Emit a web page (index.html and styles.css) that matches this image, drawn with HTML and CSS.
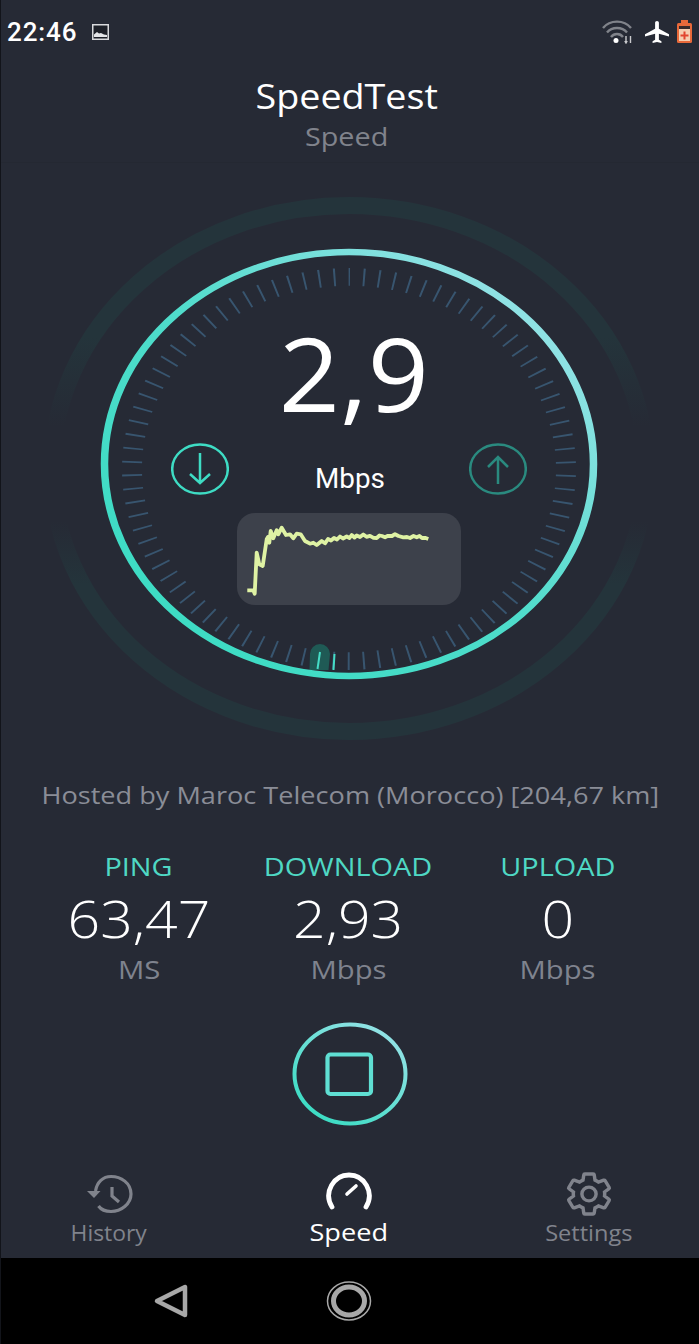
FILE: index.html
```html
<!DOCTYPE html>
<html lang="en">
<head>
    <meta charset="UTF-8">
    <title>SpeedTest</title>
    <link rel="stylesheet" href="styles.css">
</head>
<body>
<div class="app">
    <div class="status-bar">
        <div class="status-left">
            <span class="clock">22:46</span>
            <svg class="pic-icon" width="17" height="16" viewBox="0 0 17 16">
                <rect x="0.75" y="0.75" width="15.5" height="14.5" fill="#1d2028" stroke="#d8d9dc" stroke-width="1.5"/>
                <path d="M2 13V10.5L5 8l2 1.5 2-.5 3 1.5 3 .5V13z" fill="#e4e5e8"/>
            </svg>
        </div>
        <div class="status-right">
            <svg class="wifi-icon" width="30" height="24" viewBox="0 0 30 24" fill="none" stroke="#80838a" stroke-width="2.4">
                <path d="M1 8C8 -0.500 22 -0.500 29 8"/>
                <path d="M5 12.500C10 6.500 20 6.500 25 12.500"/>
                <path d="M9 17C12 13 18 13 21 17"/>
                <circle cx="14" cy="20.500" r="2.500" fill="#ffffff" stroke="none"/>
                <path d="M24 16v7M22.800 21l1.200 2 1.200-2M28.500 23v-7" stroke="#c9cacd" stroke-width="1.400"/>
            </svg>
            <svg class="plane-icon" width="24" height="22" viewBox="2 2 19 20" preserveAspectRatio="none">
                <path fill="#ffffff" d="M21 16v-2l-8-5V3.500c0-.83-.67-1.500-1.500-1.500S10 2.670 10 3.500V9l-8 5v2l8-2.500V19l-2 1.500V22l3.500-1 3.500 1v-1.500L13 19v-5.500l8 2.500z"/>
            </svg>
            <svg class="battery-icon" width="15" height="23" viewBox="0 0 15 23">
                <rect x="4" y="0" width="7" height="4" fill="#e8693a"/>
                <rect x="0" y="3" width="15" height="20" rx="1.500" fill="#e8693a"/>
                <rect x="2" y="6" width="11" height="3" fill="#3a2a2a"/>
                <rect x="2" y="9" width="11" height="12" fill="#f6cdb0"/>
                <path d="M6.500 11.500h2v3h3v2h-3v3h-2v-3h-3v-2h3z" fill="#e2452f"/>
            </svg>
        </div>
    </div>

    <header class="top-title">
        <h1>SpeedTest</h1>
        <p>Speed</p>
    </header>

    <section class="gauge">
        <svg class="gauge-art" width="699" height="600" viewBox="0 163 699 600">
            <defs>
                <linearGradient id="ringGrad" x1="0.2" y1="0.9" x2="0.9" y2="0.2">
                    <stop offset="0" stop-color="#3edcc4"/>
                    <stop offset="0.5" stop-color="#4fdccb"/>
                    <stop offset="1" stop-color="#8fe2e4"/>
                </linearGradient>
                <linearGradient id="haloGrad" x1="0" y1="0" x2="0" y2="1">
                    <stop offset="0" stop-color="#24343b"/>
                    <stop offset="0.25" stop-color="#24343b"/>
                    <stop offset="0.42" stop-color="#24343b" stop-opacity="0"/>
                    <stop offset="0.6" stop-color="#24343b" stop-opacity="0"/>
                    <stop offset="0.72" stop-color="#24343b"/>
                    <stop offset="1" stop-color="#24343b"/>
                </linearGradient>
            </defs>
            <ellipse cx="349" cy="468.500" rx="297" ry="263" fill="none" stroke="url(#haloGrad)" stroke-width="17"/>
            <g transform="translate(349 469) scale(1 0.885) rotate(-90)">
                <circle r="217" fill="none" stroke="#38556f" stroke-width="20" stroke-dasharray="2 13.150" stroke-dashoffset="1"/>
            </g>
            <path d="M309.500 670L310 654a10 10 0 0 1 20 0L328.500 670z" fill="#1f5a55"/>
            <line x1="320" y1="652" x2="317.500" y2="669" stroke="#45dcc6" stroke-width="2"/>
            <line x1="334.500" y1="654" x2="333.500" y2="670" stroke="#45dcc6" stroke-width="2"/>
            <g transform="translate(349 464) scale(1 0.867)">
                <circle r="244.500" fill="none" stroke="url(#ringGrad)" stroke-width="7.500"/>
            </g>
        </svg>

        <div class="gauge-face">
            <div class="gauge-num">2,9</div>
            <div class="gauge-row">
                <svg width="58" height="52" viewBox="0 0 58 52" fill="none" stroke="#3edcc4" stroke-width="2.500">
                    <ellipse cx="29" cy="26" rx="27.800" ry="24.500"/>
                    <path d="M29 10V40M19 31l10 9 10-9"/>
                </svg>
                <span class="gauge-unit">Mbps</span>
                <svg width="58" height="52" viewBox="0 0 58 52" fill="none" stroke="#2a8a7f" stroke-width="2.500">
                    <ellipse cx="29" cy="26" rx="27.800" ry="24.500"/>
                    <path d="M29 41V14M19 24l10-10 10 10"/>
                </svg>
            </div>
            <div class="chart">
                <svg width="224" height="92" viewBox="237 512 224 92" fill="none">
                    <polyline stroke="#dff2a4" stroke-width="3.800" stroke-linejoin="round" points="247.3,589.3 253.3,589.3 254.7,592.7 256.7,551.7 259.3,563.3 262.7,565 266.7,538.3 268,536 269.3,541.7 270.7,530 273.3,537.3 276.7,529.3 278.3,533.3 281.7,526.7 286,534 290,533.3 293.3,537.3 296.7,532.7 300.7,533.3 305,540 310,542.7 313.3,541.7 316.7,544 321.7,540 325,542.3 328,538 331,539.5 334,537 337,538.5 340,535.5 343,537.5 346.700,535.5 349.500,537 351.700,534 354.500,536.500 356.700,534.500 360,536 363.300,533.500 366.500,535.800 370,534.800 373.500,536.800 376.700,537 379.500,534.500 382,535 385,536.300 388,534.800 392,535 395,533.200 398.500,535 403.300,536.300 407,536 410,537 413.500,535 416.700,536.300 419.500,535 422,537 425,536.800 428.300,538"/>
                </svg>
            </div>
        </div>
    </section>

    <p class="host">Hosted by Maroc Telecom (Morocco) [204,67 km]</p>

    <section class="stats">
        <div class="stat">
            <div class="stat-label">PING</div>
            <div class="stat-val">63,47</div>
            <div class="stat-unit">MS</div>
        </div>
        <div class="stat">
            <div class="stat-label">DOWNLOAD</div>
            <div class="stat-val">2,93</div>
            <div class="stat-unit">Mbps</div>
        </div>
        <div class="stat">
            <div class="stat-label">UPLOAD</div>
            <div class="stat-val">0</div>
            <div class="stat-unit">Mbps</div>
        </div>
    </section>

    <div class="stop-wrap">
        <svg width="118" height="106" viewBox="0 0 118 106" fill="none">
            <defs>
                <linearGradient id="stopGrad" x1="0.2" y1="0.9" x2="0.8" y2="0.1">
                    <stop offset="0" stop-color="#3edcc4"/>
                    <stop offset="1" stop-color="#8fe2e4"/>
                </linearGradient>
            </defs>
            <ellipse cx="59" cy="53" rx="55.500" ry="49.500" stroke="url(#stopGrad)" stroke-width="4"/>
            <rect x="36.500" y="33.500" width="43.500" height="39.500" rx="3" stroke="#5fdfd3" stroke-width="4.200"/>
        </svg>
    </div>

    <nav class="tabs">
        <div class="tab">
            <div class="tab-icon">
                <svg width="48" height="40" viewBox="0 0 48 40" fill="none" stroke="#80838c" stroke-width="3.200">
                    <path d="M10.500 17C12 8 18 2.500 26 2.500C36 2.500 46 9 46 20C46 30 36 37.500 26 37.500C20 37.500 16 35.500 13.500 32"/>
                    <path d="M2 17H15.500L9 24z" fill="#80838c" stroke="none"/>
                    <path d="M27 13V22L34 28"/>
                </svg>
            </div>
            <span class="tab-name">History</span>
        </div>
        <div class="tab tab-on">
            <div class="tab-icon">
                <svg width="50" height="40" viewBox="0 0 50 40" fill="none" stroke="#ffffff" stroke-width="4.800" stroke-linecap="round">
                    <path d="M8 35C-1 20 10 3 25 3C40 3 51 20 42 35"/>
                    <path d="M23 22L32 14" stroke-width="3.600"/>
                </svg>
            </div>
            <span class="tab-name">Speed</span>
        </div>
        <div class="tab">
            <div class="tab-icon">
                <svg width="46" height="44" viewBox="1 1 22 22" preserveAspectRatio="none" fill="none" stroke="#80838c" stroke-width="1.650">
                    <path d="M19.430 12.980c.04-.32.07-.64.07-.98 0-.34-.03-.66-.07-.98l2.110-1.650c.19-.15.24-.42.12-.64l-2-3.460c-.09-.16-.26-.25-.44-.25-.06 0-.12.01-.17.03l-2.490 1c-.52-.4-1.080-.73-1.690-.98l-.38-2.650C14.460 2.180 14.250 2 14 2h-4c-.25 0-.46.18-.49.42l-.38 2.650c-.61.25-1.170.59-1.690.98l-2.490-1c-.06-.02-.12-.03-.18-.03-.17 0-.34.09-.43.25l-2 3.460c-.13.22-.07.49.12.64l2.110 1.650c-.04.32-.07.65-.07.98 0 .33.03.66.07.98l-2.110 1.650c-.19.15-.24.42-.12.64l2 3.460c.09.16.26.25.44.25.06 0 .12-.01.17-.03l2.490-1c.52.4 1.080.73 1.690.98l.38 2.650c.03.24.24.42.49.42h4c.25 0 .46-.18.49-.42l.38-2.650c.61-.25 1.170-.59 1.690-.98l2.490 1c.06.02.12.03.18.03.17 0 .34-.09.43-.25l2-3.460c.12-.22.07-.49-.12-.64l-2.110-1.650z"/>
                    <ellipse cx="12" cy="12" rx="3.400" ry="3.400"/>
                </svg>
            </div>
            <span class="tab-name tab-name-wide">Settings</span>
        </div>
    </nav>

    <div class="nav-bar">
        <svg class="nav-back" width="36" height="36" viewBox="0 0 36 36" fill="none" stroke="#a8a8a8" stroke-width="4.500" stroke-linejoin="round">
            <path d="M4 18L32 4V32z"/>
        </svg>
        <svg class="nav-home" width="46" height="42" viewBox="0 0 46 42" fill="none" stroke="#a8a8a8">
            <ellipse cx="23" cy="21" rx="21.500" ry="19" stroke-width="1.500"/>
            <ellipse cx="23" cy="21" rx="15.500" ry="14" stroke-width="5"/>
        </svg>
    </div>
</div>
</body>
</html>
```

FILE: styles.css
```css
*{
    box-sizing: border-box;
}
html,body,h1,p{
    margin: 0;
    padding: 0;
}
body{
    background-color: #000;
    font-family: "Open Sans", "Noto Sans", sans-serif;
    color: #fff;
}
svg{
    display: block;
}
.app{
    width: 699px;
    height: 1344px;
    display: flex;
    flex-direction: column;
    overflow: hidden;
    background-color: #262a35;
    border-left: 1px solid #12141a;
}

/* status bar */
.status-bar{
    height: 64px;
    display: flex;
    justify-content: space-between;
    align-items: flex-start;
    padding: 20px 7px 0 6px;
}
.status-left{
    display: flex;
    align-items: center;
    gap: 15px;
    height: 24px;
}
.clock{
    font: 500 26px/24px Roboto, sans-serif;
    letter-spacing: 0.9px;
}
.status-right{
    display: flex;
    align-items: flex-start;
    gap: 13px;
}
.plane-icon{
    margin-top: 1px;
}
.battery-icon{
    margin-left: -5px;
}

/* title */
.top-title{
    height: 99px;
    padding-right: 7px;
    display: flex;
    flex-direction: column;
    align-items: center;
    border-bottom: 1px solid #242832;
}
.top-title h1{
    font-size: 35px;
    line-height: 48px;
    font-weight: 400;
    color: #fff;
    margin-top: 8px;
    transform: scaleX(1.077);
}
.top-title p{
    font-size: 26px;
    line-height: 33px;
    color: #80838c;
    transform: scaleX(1.107);
}

/* gauge */
.gauge{
    position: relative;
    height: 600px;
    margin-left: -1px;
}
.gauge-art{
    position: absolute;
    top: 0;
    left: 0;
}
.gauge-face{
    position: absolute;
    top: 0;
    left: 0;
    width: 699px;
    padding-right: 1px;
    display: flex;
    flex-direction: column;
    align-items: center;
}
.gauge-num{
    font-size: 102px;
    line-height: 120px;
    margin-top: 150px;
    padding-left: 10px;
    transform: scaleX(1.05);
}
.gauge-row{
    width: 356px;
    display: flex;
    justify-content: space-between;
    margin-top: 10px;
}
.gauge-unit{
    font: 400 27px/32px Roboto, sans-serif;
    padding-top: 20px;
    padding-left: 2px;
    transform: scaleX(1.03);
}
.chart{
    width: 224px;
    height: 92px;
    margin-top: 18px;
    background-color: #3d414b;
    border-radius: 18px;
}

/* host and stats */
.host{
    align-self: center;
    font-size: 24px;
    line-height: 34px;
    color: #8a8d97;
    margin-top: 15px;
    transform: scaleX(1.13);
}
.stats{
    display: grid;
    grid-template-columns: repeat(3, 209.500px);
    padding-left: 33px;
    margin-top: 37px;
}
.stat{
    display: flex;
    flex-direction: column;
    align-items: center;
}
.stat-label{
    font-size: 25px;
    line-height: 34px;
    color: #4fd8c4;
    transform: scaleX(1.155);
}
.stat-val{
    font-size: 52px;
    line-height: 70px;
    font-weight: 300;
    transform: scaleX(1.1);
}
.stat-unit{
    font-size: 25px;
    line-height: 33px;
    color: #7f838e;
    transform: scaleX(1.17);
}

/* stop button */
.stop-wrap{
    display: flex;
    justify-content: center;
    margin-top: 35px;
}

/* bottom tabs */
.tabs{
    display: grid;
    grid-template-columns: repeat(3, 218px);
    column-gap: 22px;
    margin-left: -1px;
    margin-top: 45px;
    flex: 1;
}
.tab{
    display: flex;
    flex-direction: column;
    align-items: center;
    font-size: 22px;
    line-height: 30px;
    color: #80838c;
}
.tab-icon{
    height: 44px;
    display: flex;
    align-items: center;
}
.tab-name{
    margin-top: 1px;
    transform: scaleX(1.04);
}
.tab-name-wide{
    transform: scaleX(1.07);
}
.tab-on{
    color: #fff;
    font-size: 24px;
}
.tab-on .tab-icon{
    align-items: flex-start;
}
.tab-on .tab-name{
    transform: scaleX(1.13);
}
.nav-bar{
    height: 86px;
    margin-left: -1px;
    background-color: #000;
    display: flex;
    align-items: center;
    padding-left: 153px;
    gap: 137px;
}
```
